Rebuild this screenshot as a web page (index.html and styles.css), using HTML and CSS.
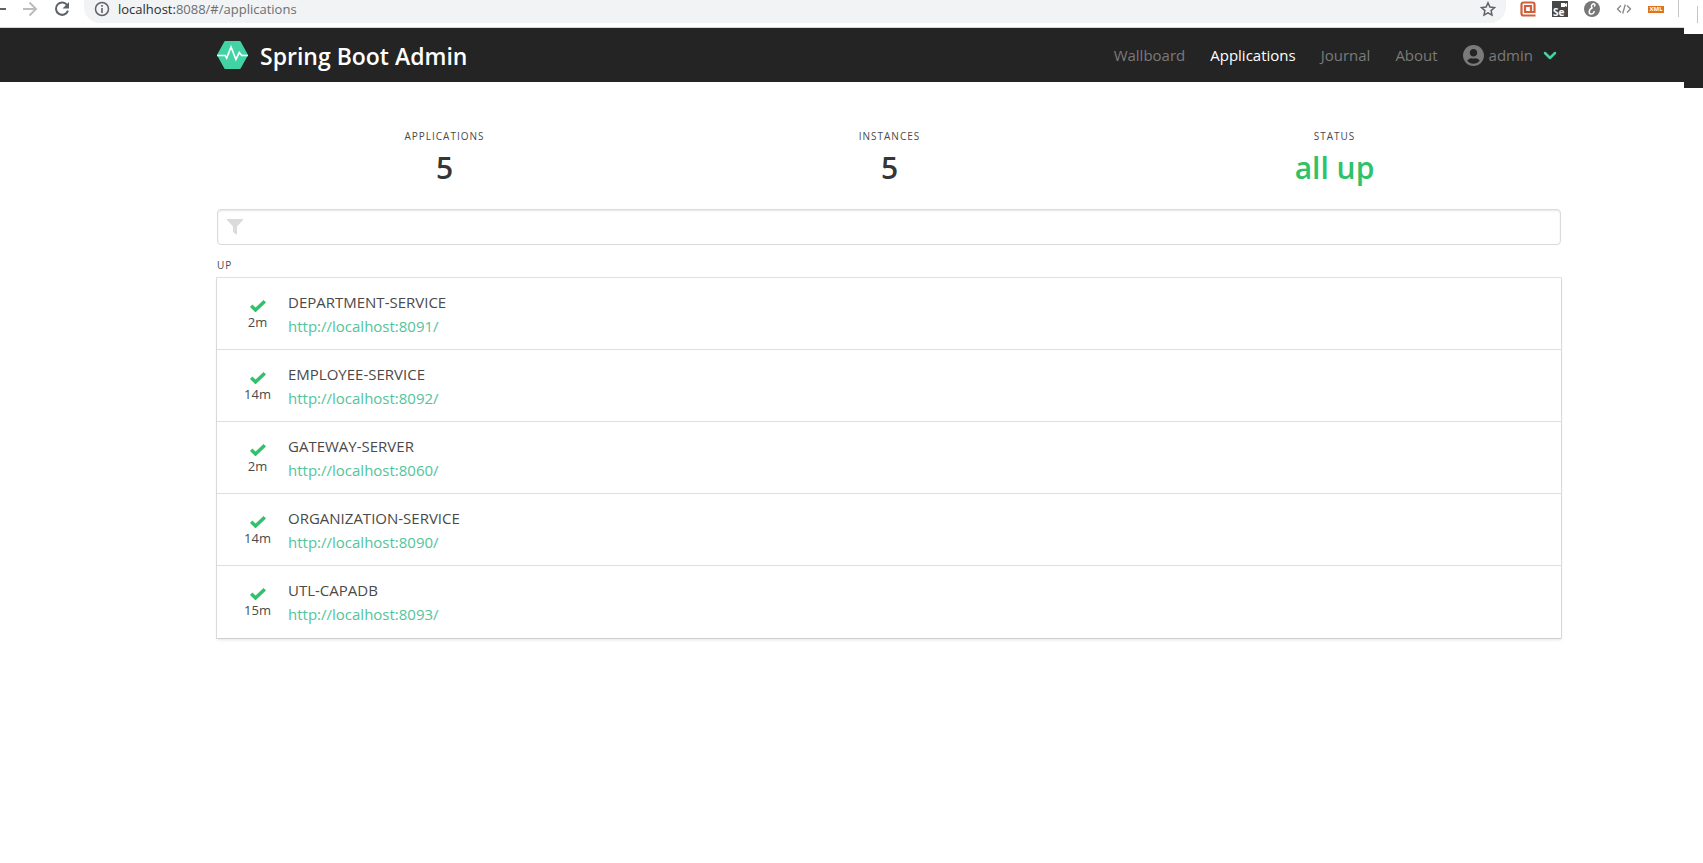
FILE: index.html
```
<!DOCTYPE html>
<html lang="en">
<head>
<meta charset="utf-8">
<title>Spring Boot Admin</title>
<link rel="stylesheet" href="styles.css">
</head>
<body>
<div class="window">
  <div class="browser-bar">
    <button class="tool back" aria-label="Back"><svg width="16" height="16" viewBox="0 0 16 16"><path d="M0 8H16M8 1L1 8l7 7" fill="none" stroke="#5f6368" stroke-width="2"/></svg></button>
    <button class="tool" aria-label="Forward"><svg width="16" height="16" viewBox="0 0 16 16"><path d="M1 8H14M7.500 1.500L14 8l-6.500 6.500" fill="none" stroke="#babcbe" stroke-width="2"/></svg></button>
    <button class="tool" aria-label="Reload"><svg width="16" height="16" viewBox="0 0 16 16"><path d="M13.300 4.200A6.200 6.200 0 1 0 14 9.700" fill="none" stroke="#5f6368" stroke-width="2"/><path d="M15 1v6.500H8.500z" fill="#5f6368"/></svg></button>
    <div class="address">
      <svg width="16" height="16" viewBox="0 0 16 16"><circle cx="8" cy="8" r="6.500" fill="none" stroke="#5f6368" stroke-width="1.500"/><path d="M8 7v5M8 4v1.700" stroke="#5f6368" stroke-width="1.600"/></svg>
      <span class="url"><span class="host">localhost:</span>8088/#/applications</span>
      <button class="tool" aria-label="Bookmark"><svg width="16" height="16" viewBox="0 0 16 16"><path d="M8 1.800l1.900 4.200 4.600.5-3.400 3.100.9 4.500L8 11.800l-4 2.300.9-4.500L1.500 6.500 6.100 6z" fill="none" stroke="#5f6368" stroke-width="1.500"/></svg></button>
    </div>
    <div class="extensions">
      <svg width="16" height="16" viewBox="0 0 16 16"><path d="M15.500 14.500H3.500a2 2 0 0 1-2-2v-9a2 2 0 0 1 2-2h9a2 2 0 0 1 2 2v7.500H11V5H5v6h6" fill="none" stroke="#d0603c" stroke-width="2.200"/></svg>
      <span class="ext-se"><svg width="16" height="16" viewBox="0 0 16 16"><rect width="16" height="16" fill="#474747"/><path d="M9 2h4v1l2-1v4l-2-1v1H9z" fill="#fff"/></svg><b>Se</b></span>
      <svg width="16" height="16" viewBox="0 0 16 16"><circle cx="8" cy="8" r="8" fill="#777"/><path d="M10 5.500c1.500-1 1-3-.5-2.800C7.500 3 6.500 6 8.500 7.200 5.500 7 4 12 6.500 13c2 .6 4-1.500 3.600-3" fill="none" stroke="#fff" stroke-width="1.500"/></svg>
      <svg width="16" height="16" viewBox="0 0 16 16"><path d="M5 4.500L1.500 8 5 11.500M11 4.500L14.500 8 11 11.500M9.300 3.500l-2.600 9" fill="none" stroke="#858585" stroke-width="1.300"/></svg>
      <span class="ext-xml">XML</span>
    </div>
    <span class="divider"></span>
  </div>

  <header class="navbar">
    <a class="brand" href="#/">
      <svg width="31" height="28" viewBox="0 0 32 28" preserveAspectRatio="none"><path d="M8.500 0h15a1 1 0 0 1 .9.500L31.500 13a2 2 0 0 1 0 2l-7.100 12.500a1 1 0 0 1-.9.500h-15a1 1 0 0 1-.9-.5L.5 15a2 2 0 0 1 0-2L7.600.5A1 1 0 0 1 8.500 0z" fill="#42d3a5"/><path d="M0 14.500h8.500L10 17l4.500-11 5 12.500 3.500-7 2.500 3H32" fill="none" stroke="#fff" stroke-width="1.700"/></svg>
      <span>Spring Boot Admin</span>
    </a>
    <nav class="menu">
      <a href="#/wallboard">Wallboard</a>
      <a class="active" href="#/applications">Applications</a>
      <a href="#/journal">Journal</a>
      <a href="#/about">About</a>
      <button class="user">
        <svg width="21" height="21" viewBox="0 0 496 496"><path d="M248 0C111 0 0 111 0 248s111 248 248 248 248-111 248-248S385 0 248 0zm0 96c49 0 88 39 88 88s-39 88-88 88-88-39-88-88 39-88 88-88zm0 344c-59 0-111-27-146-69 19-35 56-59 98-59 10 0 20 8 48 8s38-8 48-8c42 0 79 24 98 59-35 42-87 69-146 69z" fill="#7a7a7a"/></svg>
        <span>admin</span>
        <svg class="caret" width="14" height="9" viewBox="0 0 14 9"><path d="M2 2l5 5 5-5" fill="none" stroke="#42d3a5" stroke-width="2.500" stroke-linecap="round" stroke-linejoin="round"/></svg>
      </button>
    </nav>
  </header>

  <main class="content">
    <section class="stats">
      <div><p class="heading">Applications</p><p class="value">5</p></div>
      <div><p class="heading">Instances</p><p class="value">5</p></div>
      <div><p class="heading">Status</p><p class="value ok">all up</p></div>
    </section>

    <label class="filter">
      <svg width="16" height="16" viewBox="0 0 16 16"><path d="M0 0h16v1L10 7.500V16l-4-3V7.500L0 1z" fill="#dbdbdb"/></svg>
      <input type="text" aria-label="Filter">
    </label>

    <h2 class="heading group">Up</h2>
    <ul class="apps">
      <li><div class="state"><svg width="16" height="12" viewBox="0 0 16 12"><path d="M1.200 5.700l4.300 4.300 9.300-8.800" fill="none" stroke="#2fc268" stroke-width="3.400"/></svg><span>2m</span></div><div class="app"><span>DEPARTMENT-SERVICE</span><a href="http://localhost:8091/">http://localhost:8091/</a></div></li>
      <li><div class="state"><svg width="16" height="12" viewBox="0 0 16 12"><path d="M1.200 5.700l4.300 4.300 9.300-8.800" fill="none" stroke="#2fc268" stroke-width="3.400"/></svg><span>14m</span></div><div class="app"><span>EMPLOYEE-SERVICE</span><a href="http://localhost:8092/">http://localhost:8092/</a></div></li>
      <li><div class="state"><svg width="16" height="12" viewBox="0 0 16 12"><path d="M1.200 5.700l4.300 4.300 9.300-8.800" fill="none" stroke="#2fc268" stroke-width="3.400"/></svg><span>2m</span></div><div class="app"><span>GATEWAY-SERVER</span><a href="http://localhost:8060/">http://localhost:8060/</a></div></li>
      <li><div class="state"><svg width="16" height="12" viewBox="0 0 16 12"><path d="M1.200 5.700l4.300 4.300 9.300-8.800" fill="none" stroke="#2fc268" stroke-width="3.400"/></svg><span>14m</span></div><div class="app"><span>ORGANIZATION-SERVICE</span><a href="http://localhost:8090/">http://localhost:8090/</a></div></li>
      <li><div class="state"><svg width="16" height="12" viewBox="0 0 16 12"><path d="M1.200 5.700l4.300 4.300 9.300-8.800" fill="none" stroke="#2fc268" stroke-width="3.400"/></svg><span>15m</span></div><div class="app"><span>UTL-CAPADB</span><a href="http://localhost:8093/">http://localhost:8093/</a></div></li>
    </ul>
  </main>
</div>
<aside class="edge"><span class="divider"></span><div class="edge-bar"></div></aside>
</body>
</html>
```
FILE: styles.css
```
* { box-sizing: border-box; }

body {
  margin: 0;
  min-height: 100vh;
  display: grid;
  grid-template-columns: 1fr 19px;
  background: #fff;
  color: #4a4a4a;
  font-family: "Open Sans", "Noto Sans", sans-serif;
  font-size: 15px;
  line-height: 24px;
}

p, h2, ul { margin: 0; padding: 0; }
a { text-decoration: none; }
svg { display: block; flex: none; }

button {
  padding: 0;
  border: 0;
  background: none;
  color: inherit;
  font: inherit;
}

/* Browser toolbar */
.browser-bar {
  height: 28px;
  display: flex;
  align-items: flex-start;
  gap: 16px;
  border-bottom: 1px solid #d4d5d6;
  overflow: hidden;
}
.tool { flex: none; padding-top: 1px; }
.back { width: 6px; display: flex; justify-content: flex-end; }
.address {
  flex: 1;
  height: 23px;
  display: flex;
  align-items: flex-start;
  gap: 8px;
  margin: 0 -2px;
  padding: 0 10px;
  border-radius: 0 0 16px 16px;
  background: #f1f3f4;
}
.address > svg { margin-top: 1px; }
.url {
  flex: 1;
  color: #6b6f73;
  font-size: 13px;
  line-height: 18px;
}
.host { color: #2b2d30; }
.extensions {
  display: flex;
  gap: 16px;
  padding-top: 1px;
}
.ext-se { display: grid; }
.ext-se > * { grid-area: 1 / 1; }
.ext-se b {
  align-self: end;
  color: #fff;
  font-size: 10px;
  line-height: 10px;
  padding-left: 1px;
}
.ext-xml {
  width: 16px;
  height: 7px;
  margin-top: 5px;
  background: #e2711d;
  color: #fff;
  font-size: 6px;
  font-weight: 700;
  line-height: 7px;
  text-align: center;
}
.divider {
  width: 1px;
  height: 17px;
  background: #c4c6c8;
}
.browser-bar > .divider { margin: 0 5px 0 -2px; }

/* Right edge of the window */
.edge { padding-top: 6px; }
.edge .divider { display: block; margin-left: 13px; }
.edge-bar { height: 54px; margin-top: 11px; background: #242424; }

/* Navigation */
.navbar {
  height: 54px;
  display: flex;
  align-items: center;
  justify-content: space-between;
  padding: 0 127px 0 217px;
  background: #242424;
}
.brand {
  display: flex;
  align-items: center;
  gap: 12px;
  color: #fff;
  font-size: 23px;
  font-weight: 600;
}
.brand span { padding-top: 2px; }
.menu {
  display: flex;
  align-items: center;
  gap: 25px;
  color: #7a7a7a;
}
.menu a { color: #7a7a7a; }
.menu .active { color: #fff; }
.user { display: flex; align-items: center; gap: 5px; }
.caret { margin-left: 5px; }

/* Content */
.content { padding: 42px 123px 0 217px; }
.stats {
  display: grid;
  grid-template-columns: repeat(3, 1fr);
  padding: 0 4px 0 5px;
  text-align: center;
}
.heading {
  font-size: 10px;
  font-weight: 400;
  letter-spacing: 1px;
  line-height: 24px;
  text-transform: uppercase;
}
.value {
  color: #363636;
  font-size: 30px;
  font-weight: 600;
  line-height: 40px;
}
.ok { color: #2fc268; }

.filter {
  height: 36px;
  display: flex;
  align-items: center;
  gap: 10px;
  margin-top: 21px;
  padding: 0 9px;
  border: 1px solid #dbdbdb;
  border-radius: 4px;
  box-shadow: inset 0 1px 2px rgba(10, 10, 10, 0.1);
}
.filter input {
  flex: 1;
  border: 0;
  outline: 0;
  background: none;
  color: #363636;
  font: inherit;
}
.group { margin: 8px 0 1px; }

.apps {
  list-style: none;
  box-shadow: 0 2px 3px rgba(10, 10, 10, 0.1), 0 0 0 1px rgba(10, 10, 10, 0.12);
}
.apps li {
  height: 72px;
  display: flex;
  align-items: center;
  gap: 9px;
  padding-left: 19px;
  border-bottom: 1px solid #dedede;
}
.apps li:last-child { border-bottom: 0; }
.state {
  width: 43px;
  display: flex;
  flex-direction: column;
  align-items: center;
  padding-top: 4px;
  font-size: 13px;
  line-height: 20px;
}
.app { display: flex; flex-direction: column; }
.app a { color: #52c49c; }
```
